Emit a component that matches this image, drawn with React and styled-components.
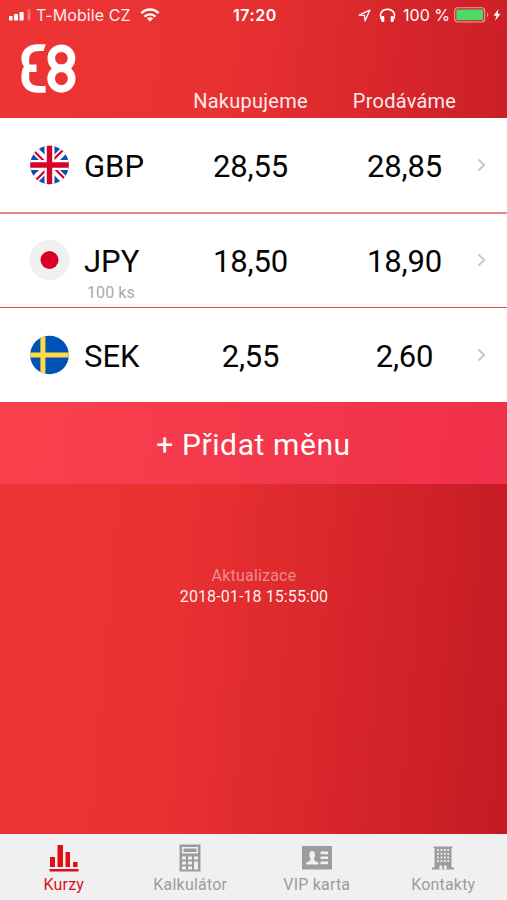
import React from "react";
import styled, { createGlobalStyle } from "styled-components";

const rates = [
  { code: "GBP", buy: "28,55", sell: "28,85" },
  { code: "JPY", buy: "18,50", sell: "18,90", amount: "100 ks" },
  { code: "SEK", buy: "2,55", sell: "2,60" },
];

const GbpFlag = () => (
  <svg width="41" height="40" viewBox="-0.5 0 41 40">
    <clipPath id="gbp">
      <circle cx="20" cy="20" r="19.3" />
    </clipPath>
    <g clipPath="url(#gbp)">
      <rect width="40" height="40" fill="#0b4fb0" />
      <path d="M3 3L37 37M37 3L3 37" stroke="#fff" strokeWidth="7.8" />
      <path
        d="M3 4.5L18 19.5M37 35.5L22 20.5M35.5 3L21 17.5M4.5 37L19 22.5"
        stroke="#d80027"
        strokeWidth="2.3"
      />
      <path d="M20 0V40M0 20H40" stroke="#fff" strokeWidth="10" />
      <path d="M20 0V40M0 20H40" stroke="#d80027" strokeWidth="5.4" />
    </g>
  </svg>
);

const JpyFlag = () => (
  <svg width="41" height="40" viewBox="-0.5 0 41 40">
    <circle cx="20" cy="20" r="19.6" fill="#f0f0f0" stroke="#e8e8e8" strokeWidth="0.6" />
    <circle cx="20" cy="20" r="9" fill="#d80027" />
  </svg>
);

const SekFlag = () => (
  <svg width="41" height="40" viewBox="-0.5 0 41 40">
    <clipPath id="sek">
      <circle cx="20" cy="20" r="19.3" />
    </clipPath>
    <g clipPath="url(#sek)">
      <rect width="40" height="40" fill="#0052b4" />
      <path d="M13.4 0V40M0 20H40" stroke="#ffda44" strokeWidth="5" />
    </g>
  </svg>
);

const flags = { GBP: GbpFlag, JPY: JpyFlag, SEK: SekFlag };

const Logo = () => (
  <svg width="55" height="50" viewBox="0 0 55 50">
    <path
      d="M24.8 0.2H17C7 0.2 0.4 6 0.4 14.5C0.4 18 1.2 20.6 3 22.6C1.2 25 0.4 28.5 0.4 34C0.4 43 7 48.7 17 48.7H24.6V41.9H18C11.5 41.9 8.2 39 8.2 33.5V28H15.5V20.6H8.2V15.8C8.2 10 11.5 7 18 7H22.6Z"
      fill="#fff"
    />
    <g fill="none" stroke="#fff" strokeWidth="7.6">
      <circle cx="40.4" cy="14.3" r="10.1" />
      <circle cx="40.4" cy="34.6" r="10.3" />
    </g>
  </svg>
);

const SignalIcon = () => (
  <svg width="22" height="12" viewBox="0 0 22 12" fill="#fff">
    <rect x="0" y="7" width="3.7" height="4.5" rx="0.8" />
    <rect x="5" y="5" width="4" height="6.5" rx="0.8" />
    <rect x="10.5" y="3" width="4.2" height="8.5" rx="0.8" />
    <rect x="18.5" y="0" width="3" height="11.5" rx="0.8" opacity="0.3" />
  </svg>
);

const WifiIcon = () => (
  <svg width="20" height="14" viewBox="0 0 20 14" fill="none" stroke="#fff" strokeWidth="2.3">
    <path d="M1.3 5.3C6.2 0.2 13.8 0.2 18.7 5.3" />
    <path d="M4.5 8.6C7.5 5.5 12.5 5.5 15.5 8.6" />
    <path d="M10 13.6L6.8 10.4C8.6 8.7 11.4 8.7 13.2 10.4Z" fill="#fff" stroke="none" />
  </svg>
);

const LocationIcon = () => (
  <svg width="13" height="13" viewBox="0 0 13 13" fill="none" stroke="#fff" strokeWidth="1.3">
    <path d="M1.2 6.2L11.8 1.2L7 12L6.6 6.4Z" strokeLinejoin="round" />
  </svg>
);

const HeadphonesIcon = () => (
  <svg width="17" height="15" viewBox="0 0 17 15">
    <path d="M3 12C-1 5.5 3.5 1.3 8.5 1.3S18 5.5 14 12" fill="none" stroke="#fff" strokeWidth="1.5" />
    <rect x="2.3" y="8" width="3" height="6" rx="1" fill="#fff" />
    <rect x="11.7" y="8" width="3" height="6" rx="1" fill="#fff" />
  </svg>
);

const BatteryIcon = () => (
  <svg width="36" height="16" viewBox="0 0 36 16">
    <rect x="0.7" y="0.7" width="30" height="14.3" rx="3" fill="none" stroke="#f0a39d" strokeWidth="1.1" />
    <rect x="2.3" y="2.5" width="26.8" height="10.7" rx="1" fill="#4cd964" />
    <path d="M33 5.5Q35.6 7.8 33 10.2Z" fill="#f0a39d" />
  </svg>
);

const BoltIcon = () => (
  <svg width="8" height="12" viewBox="0 0 8 12" fill="#fff">
    <path d="M5.5 0L0.5 6.8H3.5L2 12L7.5 4.8H4.5Z" />
  </svg>
);

const ChevronIcon = () => (
  <svg width="9" height="14" viewBox="0 0 9 14" fill="none" stroke="#c7c7cc" strokeWidth="1.9">
    <path d="M1.5 1.5L7.2 7L1.5 12.5" />
  </svg>
);

const ChartIcon = () => (
  <svg width="30" height="28" viewBox="0 0 30 28" fill="currentColor">
    <path d="M1 13H6V23H1ZM8.5 1H14V23H8.5ZM16.5 8H21V23H16.5ZM24 18H28.5V23H24ZM0.5 25H29.5V27.6H0.5Z" />
  </svg>
);

const CalculatorIcon = () => (
  <svg width="22" height="28" viewBox="0 0 22 28">
    <rect x="0.5" y="0.5" width="21" height="27" fill="currentColor" />
    <rect x="3" y="3" width="16" height="6.5" fill="#f0f0f0" />
    <rect x="4.5" y="4.5" width="13" height="3.5" fill="currentColor" />
    <path
      d="M3 12.5H7V15.5H3ZM9 12.5H13V15.5H9ZM15 12.5H19V15.5H15ZM3 17.5H7V20.5H3ZM9 17.5H13V20.5H9ZM3 22.5H7V25.5H3ZM9 22.5H13V25.5H9ZM15 17.5H19V25.5H15Z"
      fill="#f0f0f0"
    />
  </svg>
);

const CardIcon = () => (
  <svg width="30" height="24" viewBox="0 0 30 24">
    <rect width="30" height="23.5" fill="currentColor" />
    <path
      d="M4 18.5V16.8L8.5 14.3V12.5C6.8 10.5 6.5 5 10.2 5S13.6 10.5 12 12.5V14.3L16.5 16.8V18.5ZM18.5 5.5H26V8.2H18.5ZM18.5 10.5H26V13H18.5ZM18.5 15.5H26V18.3H18.5Z"
      fill="#f0f0f0"
    />
  </svg>
);

const BuildingIcon = () => (
  <svg width="22" height="24" viewBox="0 0 22 24">
    <path d="M1.5 0.5H20.5V2H19.5V21.5H22V23.5H0V21.5H2.5V2H1.5Z" fill="currentColor" />
    <path
      d="M6 3V17.5M9.4 3V17.5M12.8 3V17.5M16.2 3V17.5"
      stroke="#f0f0f0"
      strokeWidth="1.7"
      strokeDasharray="2 1.7"
    />
    <path d="M7.5 19.5H10.2V23.5H7.5ZM12 19.5H14.7V23.5H12Z" fill="#f0f0f0" />
  </svg>
);

const tabs = [
  { label: "Kurzy", Icon: ChartIcon, active: true },
  { label: "Kalkulátor", Icon: CalculatorIcon },
  { label: "VIP karta", Icon: CardIcon },
  { label: "Kontakty", Icon: BuildingIcon },
];

const App = () => {
  return (
    <Screen>
      <GlobalStyle />
      <StatusBar>
        <Carrier>
          <SignalIcon />
          <CarrierName>T-Mobile CZ</CarrierName>
          <WifiIcon />
        </Carrier>
        <Time>17:20</Time>
        <Indicators>
          <Services>
            <LocationIcon />
            <HeadphonesIcon />
          </Services>
          <Percent>100 %</Percent>
          <Power>
            <BatteryIcon />
            <BoltIcon />
          </Power>
        </Indicators>
      </StatusBar>
      <Header>
        <LogoBox>
          <Logo />
        </LogoBox>
        <ColumnTitle>Nakupujeme</ColumnTitle>
        <ColumnTitle>Prodáváme</ColumnTitle>
      </Header>
      <RateList>
        {rates.map(({ code, buy, sell, amount }) => {
          const Flag = flags[code];
          return (
            <RateRow key={code}>
              <FlagBox>
                <Flag />
              </FlagBox>
              <Currency>
                <Code>{code}</Code>
                {amount && <Amount>{amount}</Amount>}
              </Currency>
              <Rate>{buy}</Rate>
              <Rate>{sell}</Rate>
              <Arrow>
                <ChevronIcon />
              </Arrow>
            </RateRow>
          );
        })}
      </RateList>
      <AddButton>+ Přidat měnu</AddButton>
      <Update>
        <UpdateLabel>Aktualizace</UpdateLabel>
        <UpdateTime>2018-01-18 15:55:00</UpdateTime>
      </Update>
      <TabBar>
        {tabs.map(({ label, Icon, active }) => (
          <Tab key={label} $active={active}>
            <TabIcon>
              <Icon />
            </TabIcon>
            <TabLabel>{label}</TabLabel>
          </Tab>
        ))}
      </TabBar>
    </Screen>
  );
};

const GlobalStyle = createGlobalStyle`
  * {
    box-sizing: border-box;
  }
  body {
    margin: 0;
  }
  svg {
    display: block;
    flex-shrink: 0;
  }
`;

const Screen = styled.div`
  display: flex;
  flex-direction: column;
  width: 507px;
  height: 900px;
  overflow: hidden;
  font-family: Roboto, sans-serif;
  color: #fff;
  background: linear-gradient(95deg, #ed3434 0%, #eb3233 36%, #da282c 64%, #c51b25 97%);
`;

const StatusBar = styled.div`
  display: grid;
  grid-template-columns: 1fr 62px 1fr;
  align-items: center;
  height: 30px;
  padding: 0 6px 0 9px;
  font-family: Inter, sans-serif;
  font-size: 16px;
  line-height: 20px;
`;

const Carrier = styled.div`
  display: flex;
  align-items: center;
`;

const CarrierName = styled.span`
  margin: 0 9px 0 5px;
  letter-spacing: 0.1px;
  opacity: 0.9;
`;

const Time = styled.div`
  text-align: center;
  font-weight: 600;
  letter-spacing: 0.6px;
`;

const Indicators = styled.div`
  display: flex;
  align-items: center;
  justify-content: flex-end;
`;

const Services = styled.div`
  display: flex;
  align-items: center;
  gap: 8px;
`;

const Percent = styled.span`
  margin: 0 4px 0 7px;
  white-space: nowrap;
`;

const Power = styled.div`
  display: flex;
  align-items: center;
  gap: 3px;
`;

const Header = styled.header`
  display: grid;
  grid-template-columns: 164px 173px 135px 1fr;
  height: 88px;
`;

const LogoBox = styled.div`
  padding: 14px 0 0 21px;
`;

const ColumnTitle = styled.div`
  padding-top: 59px;
  font-size: 20px;
  line-height: 24px;
  letter-spacing: 0.25px;
  text-align: center;
  opacity: 0.9;
`;

const RateList = styled.div`
  height: 284px;
  background: #fff;
`;

const RateRow = styled.div`
  display: grid;
  grid-template-columns: 84px 80px 173px 135px 1fr;
  height: 95px;
  color: #050505;
  border-bottom: 1px solid #e4484d;

  &:first-child {
    height: 96px;
    margin-bottom: -1px;
    border-bottom: 2px solid #ea8487;
  }

  &:last-child {
    border-bottom: none;
  }
`;

const FlagBox = styled.div`
  padding: 27px 0 0 29px;
`;

const Currency = styled.div`
  padding-top: 31px;
`;

const Code = styled.div`
  font-size: 31px;
  line-height: 36px;
`;

const Amount = styled.div`
  margin: 4px 0 0 3px;
  font-size: 16px;
  line-height: 18px;
  letter-spacing: 0.1px;
  color: #a9a9a9;
`;

const Rate = styled.div`
  padding-top: 31px;
  font-size: 31px;
  line-height: 36px;
  letter-spacing: -0.2px;
  text-align: center;
`;

const Arrow = styled.div`
  padding: 40px 0 0 5px;
`;

const AddButton = styled.button`
  height: 82px;
  padding: 3px 0 0;
  border: none;
  font: 400 30px/36px Roboto, sans-serif;
  letter-spacing: 0.6px;
  color: #fff;
  background: linear-gradient(95deg, #f9414d, #f0304a);
`;

const Update = styled.div`
  flex: 1;
  padding: 82px 0 0 1px;
  text-align: center;
  font-size: 16px;
`;

const UpdateLabel = styled.div`
  line-height: 19px;
  letter-spacing: 0.2px;
  color: rgba(255, 255, 255, 0.45);
`;

const UpdateTime = styled.div`
  margin-top: 2px;
  line-height: 19px;
  letter-spacing: 0.1px;
  color: rgba(255, 255, 255, 0.95);
`;

const TabBar = styled.nav`
  display: grid;
  grid-template-columns: repeat(4, 126.5px);
  height: 66px;
  background: #f0f0f0;
`;

const Tab = styled.div`
  display: flex;
  flex-direction: column;
  align-items: center;
  padding: 9px 0 0 1px;
  color: ${({ $active }) => ($active ? "#dc0f17" : "#9b9d9d")};
`;

const TabIcon = styled.div`
  display: flex;
  align-items: center;
  height: 29px;
`;

const TabLabel = styled.div`
  margin-top: 3px;
  font-size: 16px;
  line-height: 19px;
  letter-spacing: 0.2px;
`;

export default App;
